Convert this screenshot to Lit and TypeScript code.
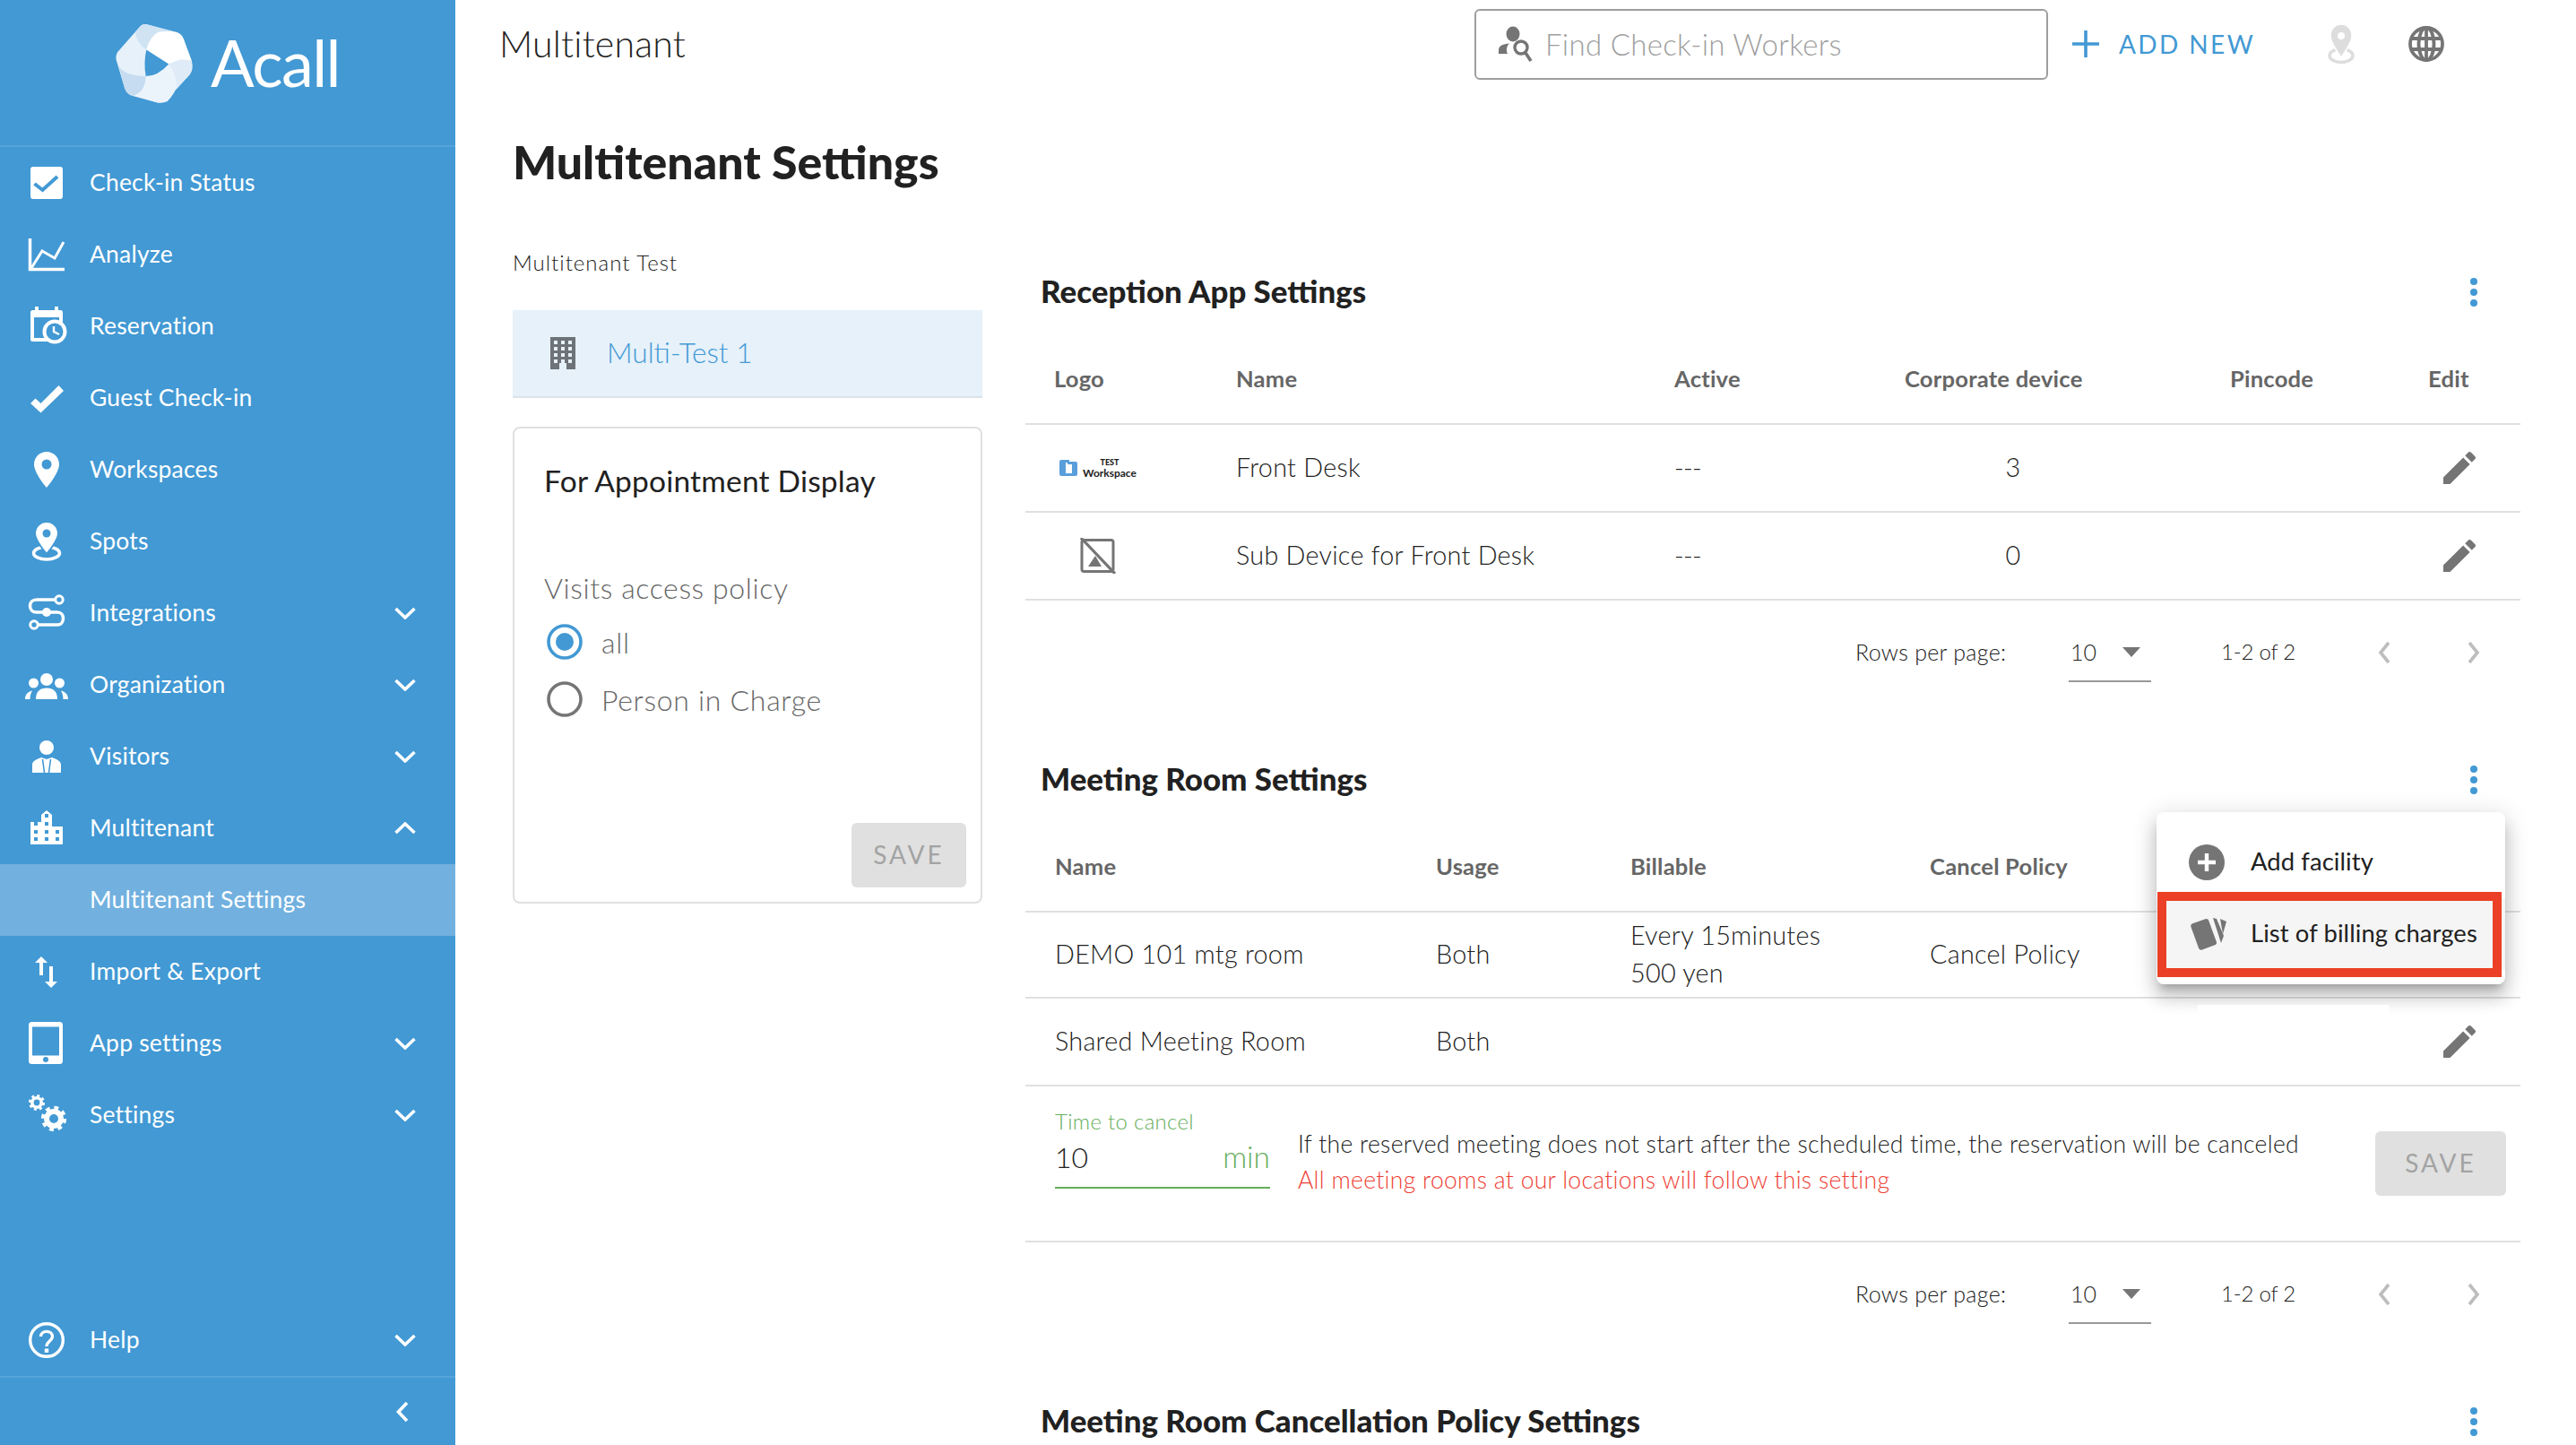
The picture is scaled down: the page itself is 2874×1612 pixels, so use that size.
import { LitElement, html, css, svg } from "lit";
import { customElement } from "lit/decorators.js";

const gear = (cx: number, cy: number, r: number, hole: number) => {
  const tr = r * 0.86;
  const c = 2 * Math.PI * tr;
  return svg`<circle cx=${cx} cy=${cy} r=${r * 0.78} fill="#fff"/>
    <circle cx=${cx} cy=${cy} r=${tr} fill="none" stroke="#fff" stroke-width=${r * 0.3} stroke-dasharray="${c / 16} ${c / 16}"/>
    <circle cx=${cx} cy=${cy} r=${hole} fill="#4299d4"/>`;
};

const B = "#4299d4";
const icons: Record<string, any> = {
  status: svg`<rect x="6" y="6" width="36" height="36" rx="3" fill="#fff"/><polyline points="10.5,25 19.5,32 36,17" fill="none" stroke="${B}" stroke-width="4"/>`,
  analyze: svg`<path d="M5.5 6V40.5H44" fill="none" stroke="#fff" stroke-width="3.5"/><polyline points="7,39 19,20 33,28 43,10" fill="none" stroke="#fff" stroke-width="3"/>`,
  reservation: svg`<rect x="6" y="6" width="36" height="35" rx="2.5" fill="#fff"/><rect x="11" y="2" width="4" height="6" fill="#fff"/><rect x="33" y="2" width="4" height="6" fill="#fff"/><rect x="10" y="14" width="28" height="23" fill="${B}"/><circle cx="33" cy="30" r="13.5" fill="#fff"/><circle cx="33" cy="30" r="9.5" fill="${B}"/><polyline points="32,24 32,30 38,33" fill="none" stroke="#fff" stroke-width="2.4"/>`,
  guest: svg`<polygon points="6,30 11.5,24.5 17.5,30 37.5,10 43,16 17.5,40.5" fill="#fff"/>`,
  pin: svg`<path fill-rule="evenodd" d="M24 4C16 4 10 10.5 10 18C10 28 24 44 24 44C24 44 38 28 38 18C38 10.5 32 4 24 4ZM24 12.5A5.5 5.5 0 1 1 24 23.5A5.5 5.5 0 1 1 24 12.5Z" fill="#fff"/>`,
  spots: svg`<ellipse cx="24" cy="37" rx="14.5" ry="7" fill="none" stroke="#fff" stroke-width="3.5"/><path d="M24 2C17 2 11 7.5 11 15C11 23 24 38 24 38C24 38 37 23 37 15C37 7.5 31 2 24 2Z" fill="#fff" stroke="${B}" stroke-width="2"/><circle cx="24" cy="15" r="4.5" fill="${B}"/>`,
  integrations: svg`<path d="M33 9H13C8 9 5.5 12 5.5 16C5.5 20 8 23 13 23H36C40 23 42.5 26 42.5 30C42.5 34 40 37 36 37H15" fill="none" stroke="#fff" stroke-width="3.5"/><circle cx="38" cy="9" r="4.2" fill="${B}" stroke="#fff" stroke-width="3"/><circle cx="10" cy="37" r="4.2" fill="${B}" stroke="#fff" stroke-width="3"/><circle cx="24" cy="23" r="5" fill="#fff"/>`,
  org: svg`<circle cx="24" cy="18" r="7" fill="#fff"/><circle cx="9.5" cy="22" r="5.5" fill="#fff"/><circle cx="38.5" cy="22" r="5.5" fill="#fff"/><path d="M12 40C12 31 17 27.5 24 27.5C31 27.5 36 31 36 40Z" fill="#fff"/><path d="M0 40C0 35 3 31.5 8 30.5C6.5 33 5.5 36 5.5 40Z" fill="#fff"/><path d="M48 40C48 35 45 31.5 40 30.5C41.5 33 42.5 36 42.5 40Z" fill="#fff"/>`,
  visitors: svg`<circle cx="24" cy="14" r="8" fill="#fff"/><path d="M8 42V33C8 29 13 27 18 25L24 27L30 25C35 27 40 29 40 33V42Z" fill="#fff"/><path d="M19.5 27L21.5 42M28.5 27L26.5 42" stroke="${B}" stroke-width="1.6" fill="none"/>`,
  multi: svg`<path d="M6 42V17H18V9L24 4L30 9V22H42V42Z" fill="#fff"/><g fill="${B}"><rect x="10" y="17" width="4" height="4"/><rect x="22" y="8" width="4" height="4"/><rect x="22" y="17" width="4" height="4"/><rect x="10" y="26" width="4" height="4"/><rect x="22" y="26" width="4" height="4"/><rect x="34" y="26" width="4" height="4"/><rect x="10" y="34" width="4" height="4"/><rect x="22" y="34" width="4" height="4"/><rect x="34" y="34" width="4" height="4"/></g>`,
  import: svg`<path d="M18 11V28M29 18V38" stroke="#fff" stroke-width="4" fill="none"/><polygon points="11,14 18,7 25,14" fill="#fff"/><polygon points="22,35 36,35 29,42" fill="#fff"/>`,
  app: svg`<rect x="4" y="0" width="38" height="47" rx="3.5" fill="#fff"/><rect x="8" y="5.5" width="30" height="32" fill="${B}"/><circle cx="23" cy="42" r="3" fill="${B}"/>`,
  settings: svg`${gear(13, 10, 9, 3.4)}${gear(32, 28, 14, 5)}`,
  help: svg`<circle cx="24" cy="24" r="18.3" fill="none" stroke="#fff" stroke-width="3.4"/><path d="M17.5 20C17.5 12.5 30.5 12.5 30.5 20C30.5 25 24 25 24 31" fill="none" stroke="#fff" stroke-width="3.4"/><rect x="21.8" y="33.5" width="4.4" height="4.4" fill="#fff"/>`,
};

const menu = [
  ["status", "Check-in Status", ""],
  ["analyze", "Analyze", ""],
  ["reservation", "Reservation", ""],
  ["guest", "Guest Check-in", ""],
  ["pin", "Workspaces", ""],
  ["spots", "Spots", ""],
  ["integrations", "Integrations", "d"],
  ["org", "Organization", "d"],
  ["visitors", "Visitors", "d"],
  ["multi", "Multitenant", "u"],
  ["", "Multitenant Settings", "sub"],
  ["import", "Import & Export", ""],
  ["app", "App settings", "d"],
  ["settings", "Settings", "d"],
];

const pencil = html`<svg class="pencil" viewBox="3 3 18 18"><path fill="#757575" d="M3 17.25V21h3.75L17.81 9.94l-3.75-3.75L3 17.25zM20.71 7.04c.39-.39.39-1.02 0-1.41l-2.34-2.34c-.39-.39-1.02-.39-1.41 0l-1.83 1.83 3.75 3.75 1.83-1.83z"/></svg>`;

const dots = html`<svg class="dots" viewBox="0 0 10 34"><circle cx="5" cy="5" r="4" fill="#4299d4"/><circle cx="5" cy="17" r="4" fill="#4299d4"/><circle cx="5" cy="29" r="4" fill="#4299d4"/></svg>`;

const pager = html`<div class="pager">
  <span class="rpp">Rows per page:</span>
  <span class="sel"><span>10</span><svg width="20" height="11" viewBox="0 0 20 11"><polygon points="0,0 20,0 10,11" fill="#757575"/></svg></span>
  <span class="range">1-2 of 2</span>
  <svg class="pg-l" width="14" height="26" viewBox="0 0 14 26"><polyline points="12,2 3,13 12,24" fill="none" stroke="#bdbdbd" stroke-width="3.6"/></svg>
  <svg class="pg-r" width="14" height="26" viewBox="0 0 14 26"><polyline points="2,2 11,13 2,24" fill="none" stroke="#bdbdbd" stroke-width="3.6"/></svg>
</div>`;

@customElement("app-root")
export class AppRoot extends LitElement {
  static styles = css`
    :host { display: block; width: 2874px; height: 1612px; overflow: hidden; background: #fff; color: #212121; font-family: "Lato", "Liberation Sans", sans-serif; }
    * { box-sizing: border-box; }
    .app { display: flex; height: 1612px; }
    .side { width: 508px; flex: none; height: 1612px; background: #4299d4; color: #fff; display: flex; flex-direction: column; }
    .brand { height: 164px; flex: none; border-bottom: 2px solid #56a4da; display: flex; padding: 27px 0 0 129px; align-items: flex-start; }
    .brand svg { width: 86px; height: 88px; display: block; }
    .brand span { font-size: 72px; font-weight: 400; line-height: 84px; margin-left: 20px; letter-spacing: -1.6px; }
    .mrow { height: 80px; display: flex; align-items: center; padding-left: 28px; font-size: 26.5px; letter-spacing: 0.2px; flex: none; }
    .mrow .ic { width: 48px; height: 48px; margin-right: 24px; flex: none; overflow: visible; }
    .mrow .lb { flex: 1; padding-bottom: 3px; }
    .mrow .chev { width: 24px; height: 14px; margin-right: 44px; flex: none; }
    .mrow.sub { background: #72b1df; padding-left: 100px; }
    .grow { flex: 1; }
    .side .foot { height: 77px; flex: none; border-top: 2px solid #56a4da; display: flex; align-items: center; justify-content: flex-end; padding-right: 52px; }
    .main { flex: 1; min-width: 0; display: flex; flex-direction: column; }
    .top { height: 98px; flex: none; display: flex; align-items: center; padding-left: 49px; }
    .top .crumb { font-size: 41px; font-weight: 300; color: #212121; width: 1088px; flex: none; letter-spacing: 0.2px; padding-bottom: 2px; }
    .search { width: 640px; height: 79px; flex: none; border: 2px solid #9e9e9e; border-radius: 6px; display: flex; align-items: center; padding-left: 24px; color: #9e9e9e; font-size: 33px; font-weight: 300; letter-spacing: 0.3px; }
    .search svg { width: 42px; height: 40px; margin-right: 11px; flex: none; }
    .add { display: flex; align-items: center; margin-left: 27px; color: #4299d4; font-size: 28px; letter-spacing: 2.4px; }
    .add svg { width: 30px; height: 30px; margin-right: 22px; }
    .tpin { width: 30px; height: 44px; margin-left: 81px; }
    .globe { width: 40px; height: 40px; margin-left: 60px; }
    h1 { margin: 52px 0 38px 64px; font-size: 51.8px; line-height: 60px; font-weight: 900; color: #212121; }
    .cols { display: flex; padding-left: 64px; align-items: flex-start; }
    .left { width: 524px; flex: none; margin-right: 48px; }
    .left .lbl { margin-top: 25px; margin-bottom: 33px; height: 40px; line-height: 40px; font-size: 24px; font-weight: 300; letter-spacing: 1px; }
    .tenant { height: 98px; background: #e6f1fa; border-bottom: 2px solid #dde3e8; display: flex; align-items: center; padding-left: 42px; color: #4299d4; font-size: 31.5px; font-weight: 300; }
    .tenant span { padding-bottom: 3px; }
    .tenant svg { width: 28px; height: 36px; margin-right: 35px; }
    .card { margin-top: 32px; height: 532px; border: 2px solid #e0e0e0; border-radius: 8px; padding: 36px 16px 0 33px; display: flex; flex-direction: column; }
    .card .t { font-size: 33.5px; line-height: 44px; font-weight: 400; color: #212121; letter-spacing: 0.2px; }
    .card .v { margin-top: 76px; font-size: 32px; line-height: 44px; color: #666; font-weight: 300; margin-bottom: 6px; letter-spacing: 0.6px; }
    .radio { height: 64px; display: flex; align-items: center; padding-left: 3px; font-size: 32px; color: #666; font-weight: 300; letter-spacing: 0.7px; }
    .radio svg { width: 40px; height: 40px; margin-right: 21px; flex: none; }
    .btn { width: 128px; height: 72px; background: #e0e0e0; border-radius: 6px; color: #a3a3a3; font-size: 28px; letter-spacing: 3px; display: flex; align-items: center; justify-content: center; flex: none; padding-bottom: 2px; }
    .card .btn { margin-top: 106px; align-self: flex-end; }
    .right { width: 1668px; flex: none; padding-top: 40px; }
    .sec { position: relative; }
    .sec-t { height: 76px; margin-bottom: 11px; display: flex; align-items: center; justify-content: space-between; padding: 0 47px 0 17px; font-size: 34.9px; font-weight: 900; color: #212121; }
    .sec-t span { padding-bottom: 3px; }
    .dots { width: 10px; height: 34px; flex: none; }
    .row { display: grid; align-items: center; border-bottom: 2px solid #e0e0e0; height: 98px; padding-left: 32px; font-size: 28.8px; font-weight: 300; letter-spacing: 0.25px; color: #212121; }
    .row > span { padding-bottom: 3px; }
    .row.h { font-size: 25.6px; font-weight: 700; color: #666; letter-spacing: 0.2px; height: 99px; }
    .g1 { grid-template-columns: 203px 489px 257px 363px 221px 1fr; }
    .g2 { grid-template-columns: 425px 217px 334px 573px 1fr; padding-left: 33px; }
    .num { width: 242px; text-align: center; }
    .dash { letter-spacing: -0.6px; }
    .pencil { width: 36px; height: 36px; display: block; margin-left: 17px; }
    .g2 .pencil { margin-left: 0; }
    .demo { height: 96px; }
    .bill { line-height: 42px; }
    .logo { display: flex; align-items: center; margin-left: 5px; }
    .logo svg { width: 21px; height: 20px; margin-right: 6px; flex: none; }
    .logo .w { display: flex; flex-direction: column; align-items: center; color: #212121; font-weight: 400; letter-spacing: 0; }
    .logo .w b { font-size: 9px; line-height: 10px; font-weight: 900; }
    .logo .w i { font-style: normal; font-size: 12px; line-height: 13px; font-weight: 700; }
    .noimg { width: 40px; height: 40px; display: block; margin-left: 29px; }
    .pager { height: 114px; display: flex; align-items: flex-start; font-size: 25px; font-weight: 300; color: #212121; padding-top: 41px; position: relative; }
    .pager > * { line-height: 32px; }
    .rpp { margin-left: 926px; width: 238px; letter-spacing: 0.3px; }
    .sel { width: 92px; height: 50px; border-bottom: 2px solid #999; display: flex; align-items: flex-start; padding-left: 2px; }
    .sel svg { margin: 11px 0 0 29px; }
    .range { margin-left: 78px; width: 175px; font-size: 24px; letter-spacing: -0.2px; }
    .pg-l, .pg-r { flex: none; margin-top: 4px; }
    .pg-r { margin-left: 86px; }
    .sp { margin-bottom: 48px; }
    .time { height: 174px; border-bottom: 2px solid #e0e0e0; display: flex; align-items: flex-start; padding-left: 33px; }
    .fld { width: 240px; padding-top: 23px; flex: none; }
    .fld .cap { font-size: 24px; line-height: 32px; color: #66ae5a; font-weight: 300; letter-spacing: 0.3px; margin-bottom: 1px; }
    .fld .inp { height: 58px; padding-bottom: 12px; border-bottom: 2px solid #66ae5a; display: flex; justify-content: space-between; align-items: center; font-size: 32px; font-weight: 300; color: #212121; }
    .fld .inp em { font-style: normal; color: #66ae5a; font-size: 33.5px; }
    .msg { margin-left: 31px; padding-top: 44px; font-size: 26.5px; line-height: 40px; font-weight: 300; letter-spacing: 0.3px; color: #212121; flex: 1; }
    .msg .r { color: #ee4035; }
    .time .btn { width: 146px; margin: 50px 16px 0 0; }
    .pop { position: absolute; z-index: 2; top: 74px; right: 17px; width: 389px; height: 192px; background: #fff; border-radius: 8px; padding: 16px 0; box-shadow: 0 9px 9px -5px rgba(0,0,0,.2), 0 15px 18px 2px rgba(0,0,0,.14), 0 5px 26px 4px rgba(0,0,0,.12); }
    .it { height: 80px; display: flex; align-items: center; padding-left: 36px; font-size: 27.4px; font-weight: 400; color: #212121; letter-spacing: 0.1px; }
    .it span { padding-bottom: 3px; }
    .it svg { width: 44px; height: 40px; margin-right: 25px; flex: none; }
    .it.on { background: #f5f5f5; }
    .mark { position: absolute; z-index: 3; left: 1263px; top: 163px; width: 384px; height: 95px; border: 10px solid #eb4025; }
    .patch { position: absolute; z-index: 3; left: 1308px; top: 289px; width: 213px; height: 40px; background: #fff; }
  `;

  private chev(kind: string) {
    if (kind === "d") return html`<svg class="chev" viewBox="0 0 24 14"><polyline points="1.5,2 12,12 22.5,2" fill="none" stroke="#fff" stroke-width="3.6"/></svg>`;
    if (kind === "u") return html`<svg class="chev" viewBox="0 0 24 14"><polyline points="1.5,12 12,2 22.5,12" fill="none" stroke="#fff" stroke-width="3.6"/></svg>`;
    return "";
  }

  render() {
    return html`<div class="app">
      <aside class="side">
        <div class="brand">
          <svg viewBox="0 0 86 88">
            <path d="M34 0L68 9Q74 11 76 17L85 44Q87 52 81 58L58 83Q52 89 45 87L19 80Q12 78 10 71L1 41Q-1 34 4 29L26 4Q30 -1 34 0Z" fill="#e6f1fa"/>
            <path d="M21.7 8.7L26 4Q30 -1 34 0L68 9Q60 7 47.7 8.7Q38 14 34.3 28.4Q24 22 21.7 8.7Z" fill="#cfe3f3"/>
            <path d="M34.3 28.4Q38 14 47.7 8.7Q60 7 68 9Q74 11 76 17L85 41Q76 38 67.7 40.9L59.3 44.4Z" fill="#fff"/>
            <path d="M59.3 44.4L67.7 40.9Q76 38 85 41Q87 52 81 58L58 83Q52 87 57.7 86Q69 74 67.7 65.9Q66 53 59.3 44.4Z" fill="#dfecf7"/>
            <path d="M33.7 58Q47 58 59.3 44.4Q66 53 67.7 65.9Q69 74 57.7 86Q52 89 45 87L21 79.4Q33 75 33.7 58Z" fill="#ecf4fb"/>
            <path d="M1 39Q3 58 33.7 58Q33 75 21 79.4L19 80Q12 78 10 71Z" fill="#c6dcf0"/>
            <path d="M34.3 28.4L59.3 44.4Q47 58 33.7 58Q31 43 34.3 28.4Z" fill="${B}"/>
          </svg>
          <span>Acall</span>
        </div>
        ${menu.map(([ic, label, kind]) =>
          kind === "sub"
            ? html`<div class="mrow sub"><span class="lb">${label}</span></div>`
            : html`<div class="mrow"><svg class="ic" viewBox="0 0 48 48">${icons[ic]}</svg><span class="lb">${label}</span>${this.chev(kind)}</div>`
        )}
        <div class="grow"></div>
        <div class="mrow"><svg class="ic" viewBox="0 0 48 48">${icons.help}</svg><span class="lb">Help</span>${this.chev("d")}</div>
        <div class="foot"><svg width="14" height="24" viewBox="0 0 14 24"><polyline points="12,2 2.5,12 12,22" fill="none" stroke="#fff" stroke-width="3.6"/></svg></div>
      </aside>
      <main class="main">
        <header class="top">
          <div class="crumb">Multitenant</div>
          <div class="search">
            <svg viewBox="0 0 42 40">
              <ellipse cx="17" cy="9" rx="7.5" ry="8.5" fill="#757575"/>
              <path d="M1 31V27C1 22 6 20 13 19.5C10 22 9 27 11 31Z" fill="#757575"/>
              <circle cx="26" cy="24" r="7" fill="none" stroke="#757575" stroke-width="3.4"/>
              <path d="M31 30L37 39" stroke="#757575" stroke-width="3.6"/>
            </svg>
            <span>Find Check-in Workers</span>
          </div>
          <div class="add">
            <svg viewBox="0 0 30 30"><path d="M15 0V30M0 15H30" stroke="#4299d4" stroke-width="3.6"/></svg>
            <span>ADD NEW</span>
          </div>
          <svg class="tpin" viewBox="0 0 30 44">
            <ellipse cx="15" cy="35" rx="13" ry="7.5" fill="none" stroke="#ddd" stroke-width="3.5"/>
            <path d="M15 0C8 0 3 5.5 3 13C3 21 15 37 15 37C15 37 27 21 27 13C27 5.5 22 0 15 0Z" fill="#ddd" stroke="#fff" stroke-width="1.5"/>
            <circle cx="15" cy="13" r="4" fill="#fff"/>
          </svg>
          <svg class="globe" viewBox="0 0 40 40" fill="none" stroke="#757575" stroke-width="3.8">
            <circle cx="20" cy="20" r="18"/>
            <ellipse cx="20" cy="20" rx="8.5" ry="18"/>
            <path d="M20 2V38M2.5 14H37.5M2.5 26H37.5"/>
          </svg>
        </header>
        <h1>Multitenant Settings</h1>
        <div class="cols">
          <div class="left">
            <div class="lbl">Multitenant Test</div>
            <div class="tenant">
              <svg viewBox="0 0 28 36">
                <path fill-rule="evenodd" fill="#6d7378" d="M0 0H28V36H18V29H10V36H0Z"/>
                <g fill="#e6f1fa">
                  ${[4, 11, 18, 25].map((y) => [4, 12, 20].map((x) => svg`<rect x=${x} y=${y} width="4" height="4"/>`))}
                </g>
              </svg>
              <span>Multi-Test 1</span>
            </div>
            <div class="card">
              <div class="t">For Appointment Display</div>
              <div class="v">Visits access policy</div>
              <div class="radio"><svg viewBox="0 0 40 40"><circle cx="20" cy="20" r="18" fill="none" stroke="#4299d4" stroke-width="3.6"/><circle cx="20" cy="20" r="10" fill="#4299d4"/></svg><span>all</span></div>
              <div class="radio"><svg viewBox="0 0 40 40"><circle cx="20" cy="20" r="18" fill="none" stroke="#757575" stroke-width="3.6"/></svg><span>Person in Charge</span></div>
              <div class="btn">SAVE</div>
            </div>
          </div>
          <div class="right">
            <section class="sec">
              <div class="sec-t"><span>Reception App Settings</span>${dots}</div>
              <div class="row h g1"><span>Logo</span><span>Name</span><span>Active</span><span>Corporate device</span><span>Pincode</span><span>Edit</span></div>
              <div class="row g1">
                <div class="logo"><svg viewBox="0 0 21 20"><path d="M3 1H12V4H8V16H11V19H3A2 2 0 0 1 1 17V3A2 2 0 0 1 3 1Z" fill="#5a9fdb"/><path d="M10 3H19A2 2 0 0 1 21 5V17A2 2 0 0 1 19 19H11V16H15V6H10Z" fill="#5a9fdb"/></svg><div class="w"><b>TEST</b><i>Workspace</i></div></div>
                <span>Front Desk</span><span class="dash">---</span><span class="num">3</span><span></span>${pencil}
              </div>
              <div class="row g1">
                <svg class="noimg" viewBox="0 0 40 40" fill="none" stroke="#757575" stroke-width="3"><rect x="2" y="2.5" width="35" height="35" rx="2.5"/><path d="M1 0L39 40" stroke-width="3.2"/><polygon points="9,32 17,20 24,32" fill="#757575" stroke="none"/></svg>
                <span>Sub Device for Front Desk</span><span class="dash">---</span><span class="num">0</span><span></span>${pencil}
              </div>
              <div class="sp">${pager}</div>
            </section>
            <section class="sec">
              <div class="sec-t"><span>Meeting Room Settings</span>${dots}</div>
              <div class="row h g2"><span>Name</span><span>Usage</span><span>Billable</span><span>Cancel Policy</span><span></span></div>
              <div class="row g2 demo"><span>DEMO 101 mtg room</span><span>Both</span><span class="bill">Every 15minutes<br />500 yen</span><span>Cancel Policy</span><span></span></div>
              <div class="row g2"><span>Shared Meeting Room</span><span>Both</span><span></span><span></span>${pencil}</div>
              <div class="time">
                <div class="fld">
                  <div class="cap">Time to cancel</div>
                  <div class="inp"><span>10</span><em>min</em></div>
                </div>
                <div class="msg">
                  <div>If the reserved meeting does not start after the scheduled time, the reservation will be canceled</div>
                  <div class="r">All meeting rooms at our locations will follow this setting</div>
                </div>
                <div class="btn">SAVE</div>
              </div>
              <div class="sp">${pager}</div>
              <div class="pop">
                <div class="it"><svg viewBox="0 0 44 40"><circle cx="20" cy="20" r="20" fill="#757575"/><path d="M20 10V30M10 20H30" stroke="#fff" stroke-width="4.4"/></svg><span>Add facility</span></div>
                <div class="it on"><svg viewBox="0 0 44 40"><path d="M27 2L31 3L39 22L36 30Z" fill="#757575"/><path d="M35 3L42 6L38 20Z" fill="#757575"/><rect x="6" y="5" width="21" height="31" rx="3" transform="rotate(-20 16 20)" fill="#757575"/></svg><span>List of billing charges</span></div>
              </div>
              <div class="mark"></div>
              <div class="patch"></div>
            </section>
            <section class="sec">
              <div class="sec-t"><span>Meeting Room Cancellation Policy Settings</span>${dots}</div>
            </section>
          </div>
        </div>
      </main>
    </div>`;
  }
}
